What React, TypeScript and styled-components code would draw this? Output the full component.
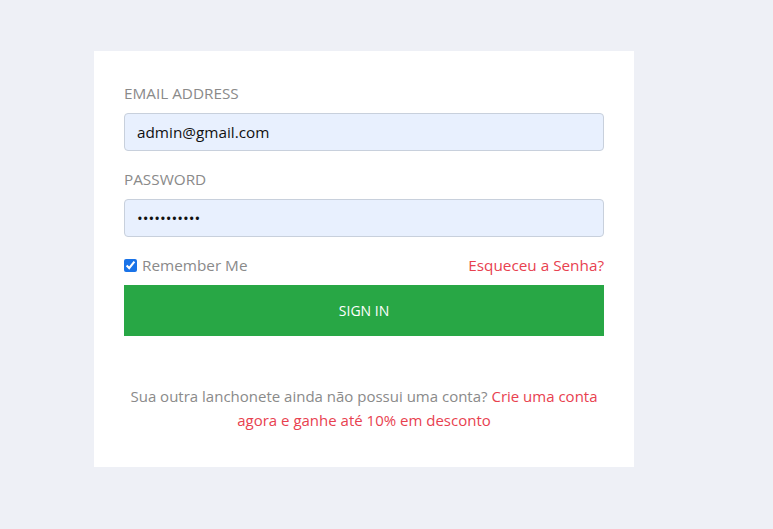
import React from "react";
import styled, { createGlobalStyle } from "styled-components";

const Global = createGlobalStyle`
  html, body { margin: 0; padding: 0; background: #eef0f6; }
  body { font-family: "Open Sans", "Noto Sans", sans-serif; }
  * { box-sizing: border-box; }
`;

const Page = styled.div`
  width: 773px;
  height: 529px;
  padding: 51px 0 0 94px;
`;

const Card = styled.form`
  width: 540px;
  height: 416px;
  background: #ffffff;
  padding: 30px 30px;
  display: flex;
  flex-direction: column;
`;

const Label = styled.label<{ $top?: number }>`
  display: block;
  font-size: 15.3px;
  line-height: 24px;
  color: #8a8a8a;
  margin-top: ${(p) => p.$top ?? 0}px;
  margin-bottom: 8px;
`;

const Input = styled.input`
  width: 480px;
  height: 38px;
  border: 1px solid #c8d0dc;
  border-radius: 4px;
  background: #e8f0fe;
  padding: 0 12px;
  font-family: inherit;
  font-size: 15.3px;
  color: #111;
  outline: none;
`;

const OptionsRow = styled.div`
  display: flex;
  align-items: center;
  justify-content: space-between;
  margin-top: 16px;
  height: 24px;
`;

const Remember = styled.label`
  display: flex;
  align-items: center;
  font-size: 15.3px;
  color: #8a8a8a;
  gap: 5px;
`;

const Check = styled.input`
  width: 13px;
  height: 13px;
  margin: 0;
  accent-color: #1a73e8;
`;

const RedLink = styled.a`
  color: #e8414f;
  font-size: inherit;
  text-decoration: none;
`;

const SignIn = styled.button`
  margin-top: 8px;
  width: 480px;
  height: 51px;
  border: none;
  background: #28a745;
  color: #ffffff;
  font-family: inherit;
  font-size: 14px;
`;

const Footer = styled.p`
  margin: 48px 0 0;
  text-align: center;
  font-size: 15px;
  line-height: 24px;
  color: #8a8a8a;
`;

const ForgotLink = styled(RedLink)`
  font-size: 15.3px;
`;

export default function App() {
  return (
    <>
      <Global />
      <Page>
        <Card onSubmit={(e) => e.preventDefault()}>
          <Label>EMAIL ADDRESS</Label>
          <Input type="email" defaultValue="admin@gmail.com" />
          <Label $top={16}>PASSWORD</Label>
          <Input type="password" defaultValue="12345678901" />
          <OptionsRow>
            <Remember>
              <Check type="checkbox" defaultChecked />
              Remember Me
            </Remember>
            <ForgotLink href="#">Esqueceu a Senha?</ForgotLink>
          </OptionsRow>
          <SignIn type="submit">SIGN IN</SignIn>
          <Footer>
            Sua outra lanchonete ainda não possui uma conta?{" "}
            <RedLink href="#">Crie uma conta agora e ganhe até 10% em desconto</RedLink>
          </Footer>
        </Card>
      </Page>
    </>
  );
}
